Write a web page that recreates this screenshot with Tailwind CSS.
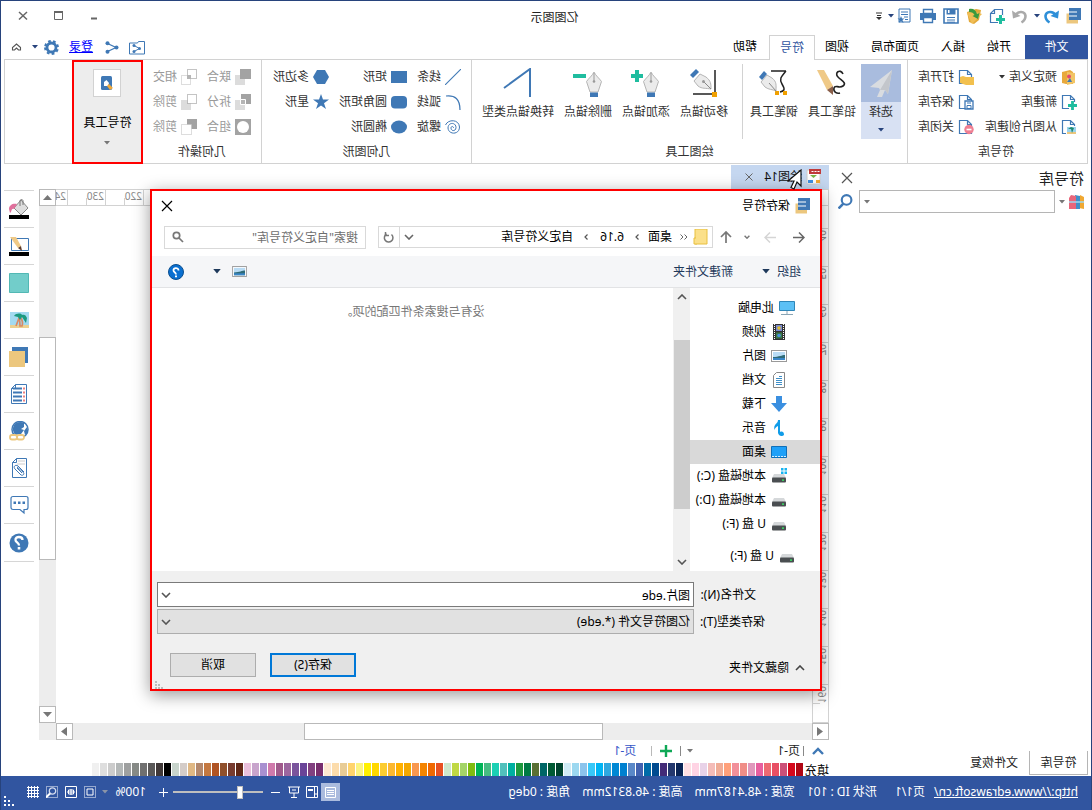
<!DOCTYPE html>
<html lang="zh-CN">
<head>
<meta charset="utf-8">
<title>亿图图示</title>
<script src="https://cdn.jsdelivr.net/npm/@tailwindcss/browser@4"></script>
</head>
<body class="overflow-hidden bg-white font-['Noto_Sans','Noto_Sans_CJK_SC',sans-serif] text-xs leading-4 text-[#222]">
<svg width="0" height="0" class="absolute">
  <defs>
    <symbol id="caret" viewBox="0 0 6 4"><path d="M0 0h6L3 3.5z" fill="currentColor"/></symbol>
    <symbol id="chev" viewBox="0 0 10 6"><path d="M1 1l4 4 4-4" fill="none" stroke="currentColor" stroke-width="1.6"/></symbol>
    <symbol id="doc" viewBox="0 0 16 16"><path d="M5.500 1.500H13.500V14.500H1.500V5.500zM5.500 1.500V5.500H1.500" fill="#fff" stroke="#3f78b5" stroke-width="1.200"/></symbol>
    <symbol id="logo" viewBox="0 0 16 16"><path d="M4 5.500h11.500v10H4z" fill="#ecc77e"/><path d="M1 0h12v12H1z" fill="#3f78b5"/><path d="M5 3.500h8v1H5zM5 7.500h8v1H5z" fill="#fff"/></symbol>
    <symbol id="drive" viewBox="0 0 16 16"><path d="M3 6h10l2 4H1z" fill="#d5d8da"/><rect x="1" y="9.500" width="14" height="5" rx="1" fill="#4a4e51"/><rect x="3" y="11.500" width="2" height="1.200" fill="#3f6"/></symbol>
    <symbol id="photo" viewBox="0 0 16 12"><rect x=".5" y=".5" width="15" height="11" fill="#fff" stroke="#999"/><path d="M2 2h12v8H2z" fill="#b9dcf5"/><path d="M2 5c3 0 6 2 12 2v3H2z" fill="#2f6b78"/><path d="M2 8h12v2H2z" fill="#3a86c8"/></symbol>
    <symbol id="pen" viewBox="0 0 16 26"><path d="M8 0C6 4 3 6 .500 9.500L4 20h8l3.500-10.500C13 6 10 4 8 0z" fill="#ebebeb" stroke="#b5b5b5"/><path d="M8 1v8" stroke="#999"/><circle cx="8" cy="9.500" r="1.300" fill="#999"/><path d="M4 20.500h8V25H4z" fill="#3f78b5"/></symbol>
  </defs>
</svg>

<div class="relative flex min-h-screen -scale-x-100 flex-col border-x border-t border-[#27437c] bg-white">

  <header class="flex flex-col">
    <div class="flex h-[30px] items-center pl-[9px]">
      <div class="flex flex-1 items-center gap-[7px]">
        <svg class="size-4"><use href="#logo"/></svg>
        <button class="block" aria-label="撤销"><svg class="size-4" viewBox="0 0 16 16"><path d="M3 7.500C6 2.500 13 3 13.500 8c0 3-1.500 5-4 6.500" fill="none" stroke="#2e8fd8" stroke-width="2.600"/><path d="M0 2.500l1 8 7.500-2.500z" fill="#2e8fd8"/></svg></button>
        <svg class="-ml-1 -mr-px h-1 w-1.5 text-[#27437c]"><use href="#caret"/></svg>
        <button class="block" aria-label="重做"><svg class="size-4" viewBox="0 0 16 16"><path d="M13 7.500C10 2.500 3 3 2.500 8c0 3 1.500 5 4 6.500" fill="none" stroke="#aaa" stroke-width="2.600"/><path d="M16 2.500l-1 8-7.500-2.500z" fill="#aaa"/></svg></button>
        <button class="block" aria-label="新建"><svg class="size-4" viewBox="0 0 16 16"><use href="#doc" transform="scale(-1 1) translate(-16 0)"/><path d="M9 8.500h7v7H9z" fill="#fff"/><path d="M5 4v0M4.500 7v9M0 11.500h9" stroke="#fff" stroke-width="5"/><path d="M4.500 7v9M0 11.500h9" stroke="#1fbd9f" stroke-width="3"/><path d="M9 14.500h5.500V8" fill="none" stroke="#3f78b5" stroke-width="1.200"/></svg></button>
        <button class="block" aria-label="打开"><svg class="size-4" viewBox="0 0 16 16"><path d="M1 2l5-1 9 3-2 10-5 2L3 12z" fill="#e3a93a"/><path d="M0 6l9-3 6 2-5 11z" fill="#f0bd55"/><path d="M13 1C9 0 6 2 5 6L2.500 5l1.500 6 5.500-3-2-1c1-2 2.500-3 5.500-3z" fill="#3a9a3e"/></svg></button>
        <button class="block" aria-label="保存"><svg class="size-4" viewBox="0 0 16 16"><path d="M1 1h14v14H1z" fill="#fff" stroke="#3f78b5" stroke-width="1.600"/><path d="M3.500 1h9v5.500h-9z" fill="#3f78b5"/><path d="M9.500 2h1.500v3H9.500z" fill="#fff"/><path d="M4 9.500h8M4 12h8M4 14.200h8" stroke="#3f78b5"/></svg></button>
        <button class="block" aria-label="打印"><svg class="size-4" viewBox="0 0 16 16"><path d="M0 5h16v7H0z" fill="#3f78b5"/><path d="M3.500 1.500h9v4h-9zM3.500 9.500h9v5h-9z" fill="#fff" stroke="#3f78b5" stroke-width="1.400"/></svg></button>
        <button class="block" aria-label="页面"><svg class="size-4" viewBox="0 0 16 16"><path d="M3 1h11v13H3z" fill="#fff" stroke="#3f78b5"/><path d="M5 4h7M5 6.500h7M5 9h4M5 11.500h3" stroke="#3f78b5"/><path d="M12 8l1 2.500 2.500 0-2 1.500 1 3-2.500-1.800L9.500 15l1-3-2-1.500H11z" fill="#3f78b5"/></svg></button>
        <svg class="-ml-1 h-1 w-1.5 text-[#27437c]"><use href="#caret"/></svg>
        <svg class="-ml-px h-2 w-1.5 text-[#333]" viewBox="0 0 6 8"><path d="M0 1h6M1 3.500h4" stroke="#333"/><path d="M0 5h6L3 8z" fill="#333"/></svg>
      </div>
      <h1 class="mr-[10px] mt-1">亿图图示</h1>
      <div class="flex flex-1 items-center justify-end gap-[23px] pr-4 text-[#666]">
        <button aria-label="最小化"><svg class="size-3" viewBox="0 0 12 12"><path d="M2 8.500h6" stroke="#666" stroke-width="2"/></svg></button>
        <button aria-label="最大化"><svg class="size-3" viewBox="0 0 12 12"><path d="M1.500 1.500h8v8h-8z" fill="none" stroke="#666"/><path d="M1 2h9" stroke="#666" stroke-width="2"/></svg></button>
        <button aria-label="关闭"><svg class="size-3" viewBox="0 0 12 12"><path d="M2 2l8 7.500M10 2L2 9.500" stroke="#666" stroke-width="1.500"/></svg></button>
      </div>
    </div>

    <div class="flex h-[28px] items-end px-[3px]">
      <nav class="flex h-6 flex-1 text-black">
        <button class="w-[63px] bg-[#3155a0] text-white">文件</button>
        <button class="ml-[14px]">开始</button>
        <button class="ml-[22px]">插入</button>
        <button class="ml-[22px]">页面布局</button>
        <button class="ml-[22px]">视图</button>
        <button class="z-10 ml-[10px] h-[25px] w-[46px] border border-b-0 border-[#d2d2d2] bg-white text-[#3155a0]">符号</button>
        <button class="ml-[12px]">帮助</button>
      </nav>
      <div class="flex h-6 items-center pr-[7px]">
        <button aria-label="共享文件夹"><svg class="h-[15px] w-4" viewBox="0 0 16 15"><path d="M.500 1.500h6l1 1.500h8v11H.500z" fill="none" stroke="#3f78b5"/><path d="M11 5.500L5.500 8.500 11 11.500" fill="none" stroke="#3f78b5"/><circle cx="11" cy="5.500" r="1.500" fill="#3f78b5"/><circle cx="5.500" cy="8.500" r="1.500" fill="#3f78b5"/><circle cx="11" cy="11.500" r="1.500" fill="#3f78b5"/></svg></button>
        <button class="ml-[10px]" aria-label="共享"><svg class="h-[13px] w-[14px]" viewBox="0 0 14 13"><path d="M11.500 2.500L3 6.500l8.500 4" fill="none" stroke="#3f78b5" stroke-width="1.300"/><circle cx="11.500" cy="2.200" r="2" fill="#3f78b5"/><circle cx="2.500" cy="6.500" r="2" fill="#3f78b5"/><circle cx="11.500" cy="10.800" r="2" fill="#3f78b5"/></svg></button>
        <a href="#" class="ml-[12px] text-[#0000ff] underline">登录</a>
        <button class="ml-[10px]" aria-label="设置"><svg class="size-[15px]" viewBox="0 0 14 14"><circle cx="7" cy="7" r="4.200" fill="none" stroke="#3f78b5" stroke-width="2.600"/><circle cx="7" cy="7" r="6" fill="none" stroke="#3f78b5" stroke-width="1.900" stroke-dasharray="2.500 2.212"/></svg></button>
        <svg class="ml-[6px] h-1 w-1.5 text-[#27437c]"><use href="#caret"/></svg>
        <button class="ml-[10px]" aria-label="折叠功能区"><svg class="h-[9px] w-[11px]" viewBox="0 0 11 9"><path d="M1.500 4.500L5.500 1l4 3.500v2.500H7.500L5.500 5 3.500 7h-2z" fill="none" stroke="#555" stroke-width="1.100"/></svg></button>
      </div>
    </div>

    <section class="mx-[3px] flex h-[105px] border border-[#d2d2d2] text-[#333]">
      <div class="flex w-[180px] flex-col border-r border-[#d2d2d2] pt-1">
        <div class="grid auto-rows-[25px] grid-cols-[103px_76px]">
          <button class="flex items-center gap-1 pl-[10px]"><svg class="size-4" viewBox="0 0 16 16"><path d="M4 3l3-2 8 2v11l-4 1H4z" fill="#e8a93c"/><path d="M2 4l8-1v13l-8-2z" fill="#f2c566"/><circle cx="8" cy="7.500" r="2" fill="#e5486d"/><path d="M5 13l2-4 3 4z" fill="#3f78b5"/></svg>预定义库<svg class="h-1 w-1.5"><use href="#caret"/></svg></button>
          <button class="flex items-center gap-1 pl-[10px]"><svg class="size-4" viewBox="0 0 16 16"><use href="#doc" transform="translate(1 0)"/><path d="M0 8h8l3-1 3 1v6l-6 2H0z" fill="#f2c04e"/></svg>打开库</button>
          <button class="flex items-center gap-1 pl-[10px]"><svg class="size-4" viewBox="0 0 16 16"><use href="#doc" transform="translate(1 0)"/><path d="M0 8h8v8H0z" fill="#fff"/><path d="M4.500 7v9M0 11.500h9" stroke="#1fbd9f" stroke-width="2.800"/></svg>新建库</button>
          <button class="flex items-center gap-1 pl-[10px]"><svg class="size-4" viewBox="0 0 16 16"><use href="#doc" transform="translate(1 0)"/><path d="M1 7h8v8H1z" fill="#fff" stroke="#3f78b5" stroke-width="1.300"/><path d="M3 9h4M3 11.500h4v3H3z" fill="none" stroke="#3f78b5"/></svg>保存库</button>
          <button class="flex items-center gap-1 pl-[10px]"><svg class="size-4" viewBox="0 0 16 16"><use href="#doc" transform="translate(1 0)"/><path d="M.500 7.500h10v8H.500z" fill="#9ad3ee" stroke="#fff"/><path d="M1 13h9v2H1z" fill="#ecc77e"/><path d="M3 9l3-1 3 2-3 0-1 4z" fill="#1f8a70"/></svg>从图片创建库</button>
          <button class="flex items-center gap-1 pl-[10px]"><svg class="size-4" viewBox="0 0 16 16"><use href="#doc" transform="translate(1 0)"/><circle cx="5" cy="10.500" r="4.700" fill="#f07f92"/><path d="M2.500 10.500h5" stroke="#fff" stroke-width="1.600"/></svg>关闭库</button>
        </div>
        <p class="flex h-6 items-center justify-center pt-0.5 pl-[3px]">符号库</p>
      </div>

      <div class="flex w-[436px] flex-col border-r border-[#d2d2d2] pt-1">
        <div class="flex h-[75px]">
          <button class="ml-[6px] flex w-10 flex-col items-center bg-[#d8e1f3]"><span class="flex h-[38px] w-full items-center justify-center bg-[#a9bcde]"><svg class="size-7" viewBox="0 0 28 28"><path d="M3 1l22 17-9 1-1 2 3 7-5 0-3-7-3 4z" fill="#d9dce0"/><path d="M3 1l12 20-5 0-3 4z" fill="#c3c6cb"/></svg></span><span class="mt-0.5">选择</span><svg class="mt-2 h-1 w-1.5 text-[#27437c]"><use href="#caret"/></svg></button>
          <button class="flex w-[58px] flex-col items-center"><svg class="my-1 h-[30px] w-8" viewBox="0 0 32 30"><path d="M5 6C8 0 14 5 10 9S1 15 5 18s8-2 9 2-3 6-6 5" fill="none" stroke="#222" stroke-width="1.600"/><path d="M24 2l7 0-10 20-6-4z" fill="#efc987"/><path d="M15 18l6 4-6 5z" fill="#8a5f4a"/></svg><span class="mt-0.5">铅笔工具</span></button>
          <button class="flex w-[58px] flex-col items-center"><svg class="my-1 h-[30px] w-8" viewBox="0 0 32 30"><path d="M4 3h15M4 3c5 6 7 8 4 13s-3 7 2 8" fill="none" stroke="#222" stroke-width="1.500"/><path d="M3 23h4v4H3zM11 23h4v4h-4z" fill="#f0a000"/><path d="M14 23c0-6-1-9 4-13l5-3 6 7-4 5c-4 3-7 2-11 4z" fill="#ebebeb" stroke="#b5b5b5"/><path d="M14 23l7-8" stroke="#888"/><path d="M23 6l3-3 5 6-3 3z" fill="#3f78b5"/></svg><span class="mt-0.5">钢笔工具</span></button>
          <div class="ml-[2px] mr-[9px] w-px bg-[#d2d2d2]"></div>
          <button class="flex w-[58px] flex-col items-center"><svg class="my-1 h-[30px] w-8" viewBox="0 0 32 30"><path d="M5 2v26M5 26h22" stroke="#222" stroke-width="1.500"/><path d="M3 24h5v5H3z" fill="#f0a000"/><path d="M9 21c0-5 0-8 5-12l6-3 6 7-4 5c-4 3-8 2-13 3z" fill="#ebebeb" stroke="#b5b5b5"/><path d="M9 21l7-7" stroke="#888"/><circle cx="16.500" cy="13.500" r="1.500" fill="#999"/><path d="M21 4l3-3 6 6-3 3z" fill="#3f78b5"/></svg><span class="mt-0.5">移动锚点</span></button>
          <button class="flex w-[58px] flex-col items-center"><svg class="my-1 h-[30px] w-8" viewBox="0 0 32 30"><svg x="3" y="4" width="16" height="26"><use href="#pen"/></svg><path d="M25 2v12M19 8h12" stroke="#1fbd9f" stroke-width="4"/></svg><span class="mt-0.5">添加锚点</span></button>
          <button class="flex w-[58px] flex-col items-center"><svg class="my-1 h-[30px] w-8" viewBox="0 0 32 30"><svg x="2" y="4" width="16" height="26"><use href="#pen"/></svg><path d="M18 8h13" stroke="#1fbd9f" stroke-width="4"/></svg><span class="mt-0.5">删除锚点</span></button>
          <button class="flex w-[82px] flex-col items-center"><svg class="my-1 h-[30px] w-8" viewBox="0 0 32 30"><path d="M4 29V1L30 20" fill="none" stroke="#3f78b5" stroke-width="2"/></svg><span class="mt-0.5">转换锚点类型</span></button>
        </div>
        <p class="flex h-6 items-center justify-center pt-0.5">绘图工具</p>
      </div>

      <div class="flex w-[210px] flex-col border-r border-[#d2d2d2] pt-1">
        <div class="grid auto-rows-[25px] grid-cols-[54px_78px_68px] pl-[10px]">
          <button class="flex items-center gap-1"><svg class="size-4" viewBox="0 0 16 16"><path d="M0 0l16 16" stroke="#3f78b5" stroke-width="1.100"/></svg>线条</button>
          <button class="flex items-center gap-1"><svg class="size-4" viewBox="0 0 16 16"><path d="M0 2h16v12H0z" fill="#3f78b5"/></svg>矩形</button>
          <button class="flex items-center gap-1"><svg class="size-4" viewBox="0 0 16 16"><path d="M4 1h8l4 7-4 7H4L0 8z" fill="#3f78b5"/></svg>多边形</button>
          <button class="flex items-center gap-1"><svg class="size-4" viewBox="0 0 16 16"><path d="M1 16C1 5 6 1 15 2" fill="none" stroke="#3f78b5" stroke-width="1.200"/></svg>弧线</button>
          <button class="flex items-center gap-1"><svg class="size-4" viewBox="0 0 16 16"><rect y="2" width="16" height="12.500" rx="4" fill="#3f78b5"/></svg>圆角矩形</button>
          <button class="flex items-center gap-1"><svg class="size-4" viewBox="0 0 16 16"><path d="M8 0l2 5.500h6l-5 3.700L13 15 8 11.500 3 15l2-5.800L0 5.500h6z" fill="#3f78b5"/></svg>星形</button>
          <button class="flex items-center gap-1"><svg class="size-4" viewBox="0 0 16 16"><path d="M15.500 6C13 0 2 0 1.500 8c0 8 11 8 11.500 1C13 3 5 3 5 8.500c0 4 5 4 5 .500 0-2-2.500-2-2.500 0" fill="none" stroke="#3f78b5"/></svg>螺旋</button>
          <button class="flex items-center gap-1"><svg class="size-4" viewBox="0 0 16 16"><ellipse cx="8" cy="8" rx="8" ry="6.500" fill="#3f78b5"/></svg>椭圆形</button>
        </div>
        <p class="flex h-6 items-center justify-center pt-0.5">几何图形</p>
      </div>

      <div class="flex w-[118px] flex-col pt-1">
        <div class="grid auto-rows-[25px] grid-cols-[54px_54px] pl-[10px] text-[#999]">
          <button class="flex items-center gap-1"><svg class="size-4" viewBox="0 0 16 16"><path d="M6 6h10v10H6z" fill="#dcdcdc"/><path d="M0 0h11v10H0z" fill="#a3a3a3"/></svg>联合</button>
          <button class="flex items-center gap-1"><svg class="size-4" viewBox="0 0 16 16"><path d="M.500.500h9v9h-9z" fill="none" stroke="#888" stroke-dasharray="1 1"/><path d="M6.500 6.500h9v9h-9z" fill="none" stroke="#bbb" stroke-dasharray="1 1"/><path d="M6 6h4v4H6z" fill="#b5b5b5"/></svg>相交</button>
          <button class="flex items-center gap-1"><svg class="size-4" viewBox="0 0 16 16"><path d="M0 0h10v10H0z" fill="#a3a3a3"/><path d="M6 6h10v10H6z" fill="#dcdcdc"/><path d="M5.500 5.500h5v5h-5z" fill="#b5b5b5" stroke="#fff"/></svg>拆分</button>
          <button class="flex items-center gap-1"><svg class="size-4" viewBox="0 0 16 16"><path d="M6 6h10v10H6z" fill="#dcdcdc"/><path d="M.500.500h9v9h-9z" fill="#fff" stroke="#888" stroke-dasharray="1 1"/></svg>剪除</button>
          <button class="flex items-center gap-1"><svg class="size-4" viewBox="0 0 16 16"><path d="M0 0h16v16H0z" fill="#a3a3a3"/><circle cx="8" cy="8" r="6" fill="#fff"/></svg>组合</button>
          <button class="flex items-center gap-1"><svg class="size-4" viewBox="0 0 16 16"><path d="M0 0h10v10H0z" fill="#a3a3a3"/><path d="M5.500 5.500h10v10h-10z" fill="#fff" stroke="#bbb" stroke-dasharray="1 1"/></svg>剪除</button>
        </div>
        <p class="flex h-6 items-center justify-center pt-0.5">几何操作</p>
      </div>

      <button class="-mb-px flex w-[71px] flex-col items-center border-2 border-[#f00] bg-[#ededed] pt-[7px] text-black">
        <span class="flex size-7 items-center justify-center border border-[#d2d2d2] bg-white"><svg class="size-4" viewBox="0 0 16 16"><rect x="3" y="1" width="11" height="14" rx="1.500" fill="#3f78b5"/><path d="M6 8l2.500-3L11 7v4H7z" fill="#fff"/><path d="M2 13l4-4 2 2-3 4z" fill="#f0a93c"/></svg></span>
        <span class="mt-[18px]">符号工具</span>
        <svg class="mt-[10px] h-1 w-1.5 text-[#777]"><use href="#caret"/></svg>
      </button>
    </section>
  </header>

  <main class="flex flex-1">
    <aside class="flex w-[262px] flex-col pl-[3px]">
      <div class="flex h-[26px] items-center justify-between pr-[12px] pt-0.5">
        <h2 class="pl-1 text-[15px]">符号库</h2>
        <button aria-label="关闭"><svg class="size-3" viewBox="0 0 12 12"><path d="M1 1l10 10M11 1L1 11" stroke="#555" stroke-width="1.200"/></svg></button>
      </div>
      <div class="flex items-center pl-[3px]">
        <svg class="size-4" viewBox="0 0 16 16"><path d="M1 3l4-2 1 13-5 1z" fill="#f0a832"/><path d="M5 2l5-1v14H5z" fill="#3f8fc8"/><path d="M9 2l5-1 2 3v11H9z" fill="#e8667a"/><path d="M1 8h15" stroke="#9fd8f0" stroke-width="1.500"/></svg>
        <svg class="ml-[4px] h-1 w-1.5 text-[#777]"><use href="#caret"/></svg>
        <label class="relative ml-[4px]"><input class="h-[23px] w-[196px] border border-[#b5b5b5] px-2" aria-label="搜索符号"><svg class="absolute right-[5px] top-[10px] h-1 w-1.5 text-[#777]"><use href="#caret"/></svg></label>
        <button class="ml-[6px]" aria-label="搜索"><svg class="size-[15px] -scale-x-100" viewBox="0 0 14 14"><circle cx="8" cy="5.500" r="4.500" fill="none" stroke="#3f78b5" stroke-width="2"/><path d="M5 9l-4.500 4.500" stroke="#3f78b5" stroke-width="2.400"/></svg></button>
      </div>
      <div class="mt-auto mb-px flex h-6 items-center">
        <button class="h-6 w-[59px] border border-t-0 border-[#b5b5b5]">符号库</button>
        <button class="ml-[11px]">文件恢复</button>
      </div>
    </aside>

    <section class="flex flex-1 flex-col">
      <div class="flex h-[25px] items-end">
        <div class="flex h-6 w-[98px] items-center gap-1 bg-[#c5d7f0] px-[7px] text-[#111]">
          <svg class="size-4" viewBox="0 0 16 16"><path d="M2 1h13v14H2z" fill="#fff" stroke="#ccc"/><path d="M1 0h12v5H1z" fill="#c03a3a"/><path d="M2.500 2.500h9" stroke="#fff" stroke-dasharray="2 1"/><path d="M5 6h7L8.500 9z" fill="#7ab648"/><path d="M2 11h4v3H2z" fill="#f0a832"/><path d="M9 11h5v3H9z" fill="#3f8fe0"/></svg>
          <span>绘图14</span>
          <button class="ml-auto mr-[-2px]" aria-label="关闭标签"><svg class="size-2" viewBox="0 0 8 8"><path d="M.500.500l7 7M7.500.500l-7 7" stroke="#666"/></svg></button>
          <span class="w-[5px]"></span>
        </div>
      </div>

      <div class="flex flex-1">
        <div class="flex flex-1 flex-col">
          <div class="flex h-[17px]">
            <div class="w-[17px] border border-[#d2d2d2]"></div>
            <div id="hruler" class="flex w-0 flex-1 overflow-hidden border-y border-[#d2d2d2] pl-[22px]"></div>
          </div>
          <div class="flex h-0 flex-1">
            <div id="vruler" class="w-[17px] overflow-hidden border-x border-b border-[#d2d2d2] pt-[22px]"></div>
            <div class="flex-1 bg-white"></div>
          </div>
          <div class="flex h-[17px] bg-[#ededed]">
            <button class="flex w-[17px] items-center justify-center border border-[#b9b9b9] bg-white" aria-label="向左滚动"><svg class="h-[9px] w-[6px]" viewBox="0 0 6 9"><path d="M6 0v9L0 4.500z" fill="#777"/></svg></button>
            <div class="flex flex-1 pl-[209px] pr-[231px]"><div class="flex-1 border border-[#b9b9b9] bg-white"></div></div>
            <button class="flex w-[17px] items-center justify-center border border-[#b9b9b9] bg-white" aria-label="向右滚动"><svg class="h-[9px] w-[6px]" viewBox="0 0 6 9"><path d="M0 0v9l6-4.500z" fill="#777"/></svg></button>
          </div>
        </div>
        <div class="flex w-[17px] flex-col bg-[#ededed] pb-[17px]">
          <button class="flex h-[17px] items-center justify-center border border-[#b9b9b9] bg-white" aria-label="向上滚动"><svg class="h-[5px] w-[9px]" viewBox="0 0 9 5"><path d="M0 5h9L4.500 0z" fill="#777"/></svg></button>
          <div class="flex flex-1 flex-col pt-[131px] pb-[146px]"><div class="flex-1 border border-[#b9b9b9] bg-white"></div></div>
          <button class="flex h-[17px] items-center justify-center border border-[#b9b9b9] bg-white" aria-label="向下滚动"><svg class="h-[5px] w-[9px]" viewBox="0 0 9 5"><path d="M0 0h9L4.500 5z" fill="#777"/></svg></button>
        </div>
      </div>

      <div class="flex h-[22px] items-center pl-[5px]">
        <button aria-label="展开"><svg class="h-2 w-3" viewBox="0 0 12 8"><path d="M1 7l5-5 5 5" fill="none" stroke="#3f78b5" stroke-width="2.400"/></svg></button>
        <span class="ml-2 h-[10px] w-px bg-[#888]"></span>
        <button class="ml-[3px]">页-1</button>
        <svg class="ml-[84px] h-1 w-1.5 text-[#777]"><use href="#caret"/></svg>
        <span class="ml-[6px] h-[10px] w-px bg-[#888]"></span>
        <button class="ml-[8px]" aria-label="新增页"><svg class="size-3" viewBox="0 0 12 12"><path d="M6 0v12M0 6h12" stroke="#0ea856" stroke-width="2.400"/></svg></button>
        <span class="ml-[8px] h-[10px] w-px bg-[#b9b9b9]"></span>
        <button class="ml-[15px] text-[#3657c8]">页-1</button>
      </div>
      <div class="flex h-[14px] items-center gap-px text-black">
        <span class="w-[25px] pt-1">填充</span>
        <div id="palette" class="flex gap-px"></div>
      </div>
    </section>

    <nav class="ml-[5px] mr-[3px] mt-[26px] w-[30px] divide-y divide-[#d6d6d6] self-start border-y border-[#d6d6d6] [&>button]:flex [&>button]:h-[37px] [&>button]:w-full [&>button]:items-center [&>button]:justify-center">
      <button aria-label="填充"><svg class="size-5" viewBox="0 0 20 20"><path d="M8 1l7 8-7 7-7-7z" fill="#dedede" stroke="#888"/><path d="M6 6V2c0-2 3-2 3 0v5" fill="none" stroke="#777"/><path d="M12 5c4-1 8 1 8 5l-1 4c-2-1-1-5-4-4z" fill="#e0709c"/><path d="M0 16h20v4H0z" fill="#000"/></svg></button>
      <button aria-label="线条"><svg class="size-5" viewBox="0 0 20 20"><path d="M.500 2.500h17v12H.500z" fill="#fff" stroke="#3f78b5"/><path d="M13 1h6l-8 11-3-2z" fill="#efc987"/><path d="M8 10l3 2-4 3z" fill="#5c3a2a"/><path d="M0 16h20v4H0z" fill="#000"/></svg></button>
      <button aria-label="主题"><svg class="size-5" viewBox="0 0 20 20"><path d="M.500.500h19v19H.500z" fill="#72cdca" stroke="#52b8b4"/></svg></button>
      <button aria-label="图片"><svg class="size-5" viewBox="0 0 20 20"><path d="M0 2h19v16H0z" fill="#a3daf0"/><path d="M0 15h19v3H0z" fill="#ecd090"/><path d="M8 8c-2 4-2 6-1 8h2c0-3 0-5 1-8l3 8" fill="none" stroke="#d88a66" stroke-width="1.700"/><path d="M2 8c1-3 3-4 5-3 1-2 6-2 8 1l-4 1-2 3-2-3-4 6z" fill="#1c9a80"/></svg></button>
      <button aria-label="图层"><svg class="size-5" viewBox="0 0 20 20"><path d="M1 0h16v16H1z" fill="#3f78b5"/><path d="M4 4h16v16H4z" fill="#ecc77e"/></svg></button>
      <button aria-label="列表"><svg class="size-5" viewBox="0 0 20 20"><path d="M2.500.500h11l4 4v15h-15z" fill="#fff" stroke="#3f78b5"/><path d="M13.500.500v4h4" fill="none" stroke="#3f78b5"/><path d="M7 4.500h9M7 8.500h9M7 12.500h9M7 16.500h9" stroke="#3f78b5" stroke-width="2"/><path d="M4 4.500h2M4 8.500h2M4 12.500h2M4 16.500h2" stroke="#ee8080" stroke-width="2"/></svg></button>
      <button aria-label="超链接"><svg class="size-5" viewBox="0 0 20 20"><circle cx="9" cy="8.500" r="8" fill="#fff" stroke="#3f78b5" stroke-width="1.500"/><path d="M5 2c3-2 8-1 10 2 2 4 1 6-1 10l-6-1-3-4 3-1-3-2z" fill="#3f78b5"/><path d="M2 6l3 4-1 4-3-3z" fill="#3f78b5"/><rect x="5" y="14" width="7" height="4.500" rx="2" fill="#fff" stroke="#ecc77e" stroke-width="1.800"/><rect x="12" y="14" width="7" height="4.500" rx="2" fill="#fff" stroke="#ecc77e" stroke-width="1.800"/></svg></button>
      <button aria-label="附件"><svg class="size-5" viewBox="0 0 20 20"><path d="M2.500.500h10l4 4v15h-14z" fill="#fff" stroke="#3f78b5"/><path d="M12.500.500v4h4" fill="none" stroke="#3f78b5"/><path d="M4 3h7M4 6h8" stroke="#ccc"/><path d="M5 14l6-6c3-2 5 1 3 3l-6 6c-2 1-4-1-2-3l6-5M7 15l5-5" fill="none" stroke="#3f78b5"/></svg></button>
      <button aria-label="批注"><svg class="size-5" viewBox="0 0 20 20"><path d="M3 1.500h13q2 0 2 2v9q0 2-2 2H9L5 18v-3.500H3q-2 0-2-2v-9q0-2 2-2z" fill="#fff" stroke="#3f78b5" stroke-width="1.200"/><path d="M4 6.500h2.500v2.500H4zM8.500 6.500H11v2.500H8.500zM13 6.500h2.500v2.500H13z" fill="#3f78b5"/></svg></button>
      <button aria-label="帮助"><svg class="size-5" viewBox="0 0 20 20"><circle cx="10" cy="10" r="9.500" fill="#3f78b5"/><path d="M6.500 7c0-4 7.500-4 7 0 0 2.500-3.500 2.500-3.500 5.500" fill="none" stroke="#fff" stroke-width="2.300"/><path d="M8.700 14h2.600v2.500H8.700z" fill="#fff"/></svg></button>
    </nav>
  </main>

  <footer class="flex h-[35px] items-center bg-[#3155a0] pb-[3px] pl-[13px] pr-[3px] text-white">
    <a href="#" class="underline">http://www.edrawsoft.cn/</a>
    <span class="ml-[9px]">页1/1</span>
    <span class="ml-[18px]">形状 ID : 101</span>
    <span class="ml-3">宽度 : 48.4187mm</span>
    <span class="ml-3">高度 : 46.8312mm</span>
    <span class="ml-3">角度 : 0deg</span>
    <div class="ml-auto flex items-center">
      <button class="flex h-[18px] w-[19px] items-center justify-center bg-[#aabbde]" aria-label="普通视图"><svg class="size-[11px]" viewBox="0 0 11 11"><path d="M.500.500h10v10H.500zM2 3.500h7M2 5.500h7M2 7.500h7" fill="none" stroke="#fff"/></svg></button>
      <button class="ml-[3px]" aria-label="页面视图"><svg class="size-3" viewBox="0 0 12 12"><path d="M.500.500h11v11H.500zM3.500.500v11M.500 8h3" fill="none" stroke="#fff"/><path d="M5 4h5" stroke="#fff" stroke-width="2"/></svg></button>
      <button class="ml-[6px]" aria-label="演示视图"><svg class="size-3" viewBox="0 0 12 12"><path d="M0 1h12M1.500 1v6h9V1M6 7v4M3 11.500h6M4 4h4" fill="none" stroke="#fff"/></svg></button>
      <button class="ml-[8px]" aria-label="缩小"><svg class="size-[9px]" viewBox="0 0 9 9"><path d="M0 4.500h9" stroke="#fff"/></svg></button>
      <input type="range" min="0" max="100" value="76" aria-label="缩放" class="ml-2 h-4 w-[90px] rotate-180 appearance-none bg-transparent [&::-webkit-slider-runnable-track]:h-0.5 [&::-webkit-slider-runnable-track]:bg-[#bfbfbf] [&::-webkit-slider-thumb]:-mt-[6px] [&::-webkit-slider-thumb]:h-[13px] [&::-webkit-slider-thumb]:w-[6px] [&::-webkit-slider-thumb]:appearance-none [&::-webkit-slider-thumb]:border [&::-webkit-slider-thumb]:border-[#bfbfbf] [&::-webkit-slider-thumb]:bg-white">
      <button class="ml-[5px]" aria-label="放大"><svg class="size-[9px]" viewBox="0 0 9 9"><path d="M0 4.500h9M4.500 0v9" stroke="#fff"/></svg></button>
      <span class="ml-[13px] w-8">100%</span>
      <svg class="ml-[6px] h-1 w-1.5 text-[#8a94a8]"><use href="#caret"/></svg>
      <button class="ml-[6px]" aria-label="选区"><svg class="size-3" viewBox="0 0 12 12"><path d="M.500.500h11v11H.500z" fill="none" stroke="#fff" stroke-dasharray="1 1"/><path d="M3 3h6v6H3z" fill="none" stroke="#fff"/></svg></button>
      <button class="ml-[7px]" aria-label="适应"><svg class="size-3" viewBox="0 0 12 12"><path d="M.500.500h11v11H.500zM2 6h8M6 3v6M3.500 4v4h5V4z" fill="none" stroke="#fff"/></svg></button>
      <button class="ml-[7px]" aria-label="放大区域"><svg class="size-3" viewBox="0 0 12 12"><path d="M.500.500h11v11H.500z" fill="none" stroke="#fff" stroke-dasharray="1 1"/><circle cx="5.500" cy="5" r="3.200" fill="#3155a0" stroke="#d5ddef" stroke-width="1.300"/><path d="M8 7.500l4 4" stroke="#fff" stroke-width="2"/></svg></button>
      <button class="ml-[7px]" aria-label="网格"><svg class="size-3" viewBox="0 0 12 12"><path d="M1.500 0v12M4.500 0v12M7.500 0v12M10.500 0v12M0 1.500h12M0 4.500h12M0 7.500h12M0 10.500h12" stroke="#fff"/></svg></button>
      <svg class="ml-[13px] mt-[18px] size-[10px]" viewBox="0 0 10 10"><path d="M8 0h2v2H8zM8 4h2v2H8zM4 4h2v2H4zM8 8h2v2H8zM4 8h2v2H4zM0 8h2v2H0z" fill="#fff"/></svg>
    </div>
  </footer>

  <div role="dialog" aria-label="保存符号" class="absolute left-[269px] top-[188px] flex w-[672px] flex-col border-2 border-[#f00] bg-white text-black shadow-[0_4px_16px_rgba(0,0,0,0.4)]">
    <div class="flex h-[30px] items-center px-[9px]">
      <svg class="size-4"><use href="#logo"/></svg>
      <h2 class="ml-[5px]">保存符号</h2>
      <button class="ml-auto" aria-label="关闭对话框"><svg class="size-3" viewBox="0 0 12 12"><path d="M1 1l10 10M11 1L1 11" stroke="#000" stroke-width="1.200"/></svg></button>
    </div>
    <div class="flex h-[35px] items-center pb-[3px] pl-[15px] pr-[12px]">
      <button aria-label="后退"><svg class="h-[11px] w-3" viewBox="0 0 12 11"><path d="M12 5.500H1M6 .500l-5 5 5 5" fill="none" stroke="#666" stroke-width="1.500"/></svg></button>
      <button class="ml-[17px]" aria-label="前进"><svg class="h-[11px] w-3" viewBox="0 0 12 11"><path d="M0 5.500h11M6 .500l5 5-5 5" fill="none" stroke="#d5d5d5" stroke-width="1.500"/></svg></button>
      <svg class="ml-[14px] h-1 w-1.5" viewBox="0 0 10 6"><path d="M1 1l4 4 4-4" fill="none" stroke="#777" stroke-width="2.400"/></svg>
      <button class="ml-[12px]" aria-label="向上"><svg class="size-3" viewBox="0 0 12 12"><path d="M6 12V1M1 6l5-5 5 5" fill="none" stroke="#777" stroke-width="1.700"/></svg></button>
      <div class="ml-[7px] flex h-[22px] w-[335px] items-center border border-[#d9d9d9] pl-1">
        <svg class="size-4" viewBox="0 0 16 16"><path d="M1 0h12v15H1z" fill="#fbe08a" stroke="#e8c040"/><path d="M12 9h2v6h-3" fill="#fbe08a" stroke="#e8c040"/></svg>
        <svg class="ml-[4px] h-[6px] w-2" viewBox="0 0 8 6"><path d="M3.500.500L1 3l2.500 2.500M7.500.500L5 3l2.500 2.500" fill="none" stroke="#666"/></svg>
        <button class="ml-[8px]">桌面</button>
        <svg class="ml-[9px] h-[6px] w-1" viewBox="0 0 4 6"><path d="M.500.500L3 3 .500 5.500" fill="none" stroke="#555" stroke-width="1.200"/></svg>
        <button class="ml-[11px]">6.16</button>
        <svg class="ml-[12px] h-[6px] w-1" viewBox="0 0 4 6"><path d="M.500.500L3 3 .500 5.500" fill="none" stroke="#555" stroke-width="1.200"/></svg>
        <button class="ml-[11px]">自定义符号库</button>
        <svg class="ml-auto mr-[4px] h-[6px] w-[10px] text-[#666]"><use href="#chev"/></svg>
        <button class="flex h-full w-[21px] items-center justify-center border-l border-[#d9d9d9]" aria-label="刷新"><svg class="size-[11px]" viewBox="0 0 11 11"><path d="M7.500 2A4.300 4.300 0 1 1 2.500 2.500" fill="none" stroke="#777" stroke-width="1.500"/><path d="M2.500 0v3.500H6" fill="none" stroke="#777" stroke-width="1.500" transform="scale(-1 1) translate(-11 0)"/></svg></button>
      </div>
      <label class="relative ml-auto"><input class="block h-[23px] w-[202px] border border-[#d9d9d9] pl-[7px] placeholder:text-[#6e6e6e]" placeholder="搜索&quot;自定义符号库&quot;" aria-label="搜索"><svg class="absolute right-[8px] top-[5px] size-3" viewBox="0 0 12 12"><circle cx="7.500" cy="4.500" r="3.200" fill="none" stroke="#777" stroke-width="1.700"/><path d="M5 7l-4 4" stroke="#777" stroke-width="1.700"/></svg></label>
    </div>
    <div class="flex h-8 items-center border-b border-[#e2e3e5] bg-[#f5f6f8] pl-[19px] pr-[16px] text-[#1e395b]">
      <button>组织</button>
      <svg class="ml-[7px] h-[5px] w-2"><use href="#caret"/></svg>
      <button class="ml-[29px]">新建文件夹</button>
      <button class="ml-auto" aria-label="视图"><svg class="h-[11px] w-[15px]"><use href="#photo"/></svg></button>
      <svg class="ml-[11px] h-[5px] w-2"><use href="#caret"/></svg>
      <button class="ml-[29px]" aria-label="获取帮助"><svg class="size-4" viewBox="0 0 16 16"><circle cx="8" cy="8" r="7.500" fill="#0a6fd0" stroke="#0c4f8f"/><path d="M5.500 6.500c0-3.500 5.500-3 5 0 0 1.800-2.500 1.800-2.500 4" fill="none" stroke="#fff" stroke-width="1.800"/><path d="M7 11.500h2v1.800H7z" fill="#fff"/></svg></button>
    </div>
    <div class="flex h-[283px]">
      <ul class="w-[130px] pt-[8px] [&>li]:flex [&>li]:h-6 [&>li]:items-center [&>li]:gap-[5px] [&>li]:whitespace-nowrap [&>li]:pl-[33px]">
        <li class="-ml-2"><svg class="size-4" viewBox="0 0 16 16"><path d="M.500 1.500h15v9H.500z" fill="#5cc0f5" stroke="#2f86b8"/><path d="M8 11v3M2 14.500h12" stroke="#8aa5b5"/></svg>此电脑</li>
        <li><svg class="size-4" viewBox="0 0 16 16"><path d="M2 0h12v16H2z" fill="#333"/><path d="M5 1h6v6H5z" fill="#7a8ad0"/><path d="M5 8.500h6v6H5z" fill="#3a7a48"/><circle cx="8" cy="4" r="1.800" fill="#e0c030"/><circle cx="8" cy="11.500" r="1.800" fill="#4a90e0"/><path d="M3.500 0v16M12.500 0v16" stroke="#fff" stroke-dasharray="1 1"/></svg>视频</li>
        <li><svg class="size-4" viewBox="0 -2 16 16"><use href="#photo" width="16" height="12"/></svg>图片</li>
        <li><svg class="size-4" viewBox="0 0 16 16"><path d="M2.500.500h8l3 3v12h-11z" fill="#fff" stroke="#888"/><path d="M5 4.500h3M5 6.500h6M5 8.500h6M5 10.500h6M5 12.500h6" stroke="#3f8fc8"/></svg>文档</li>
        <li><svg class="size-4" viewBox="0 0 16 16"><path d="M5 0h6v7h5l-8 9-8-9h5z" fill="#3a8fe0"/></svg>下载</li>
        <li><svg class="size-4" viewBox="0 0 16 16"><path d="M7 0h2c0 4 5 4 3.500 10-.500-2-1.500-3-3.500-4v7c-1 4-6 3.500-6 1.500 0-2.500 2-3.500 4-2.500z" fill="#109ce8"/></svg>音乐</li>
        <li class="bg-[#d9d9d9]"><svg class="size-4" viewBox="0 0 16 16"><path d="M.500 2.500h15v11H.500z" fill="#1ea0f8" stroke="#0f6fb8"/><path d="M1 12.500h14" stroke="#d5eeff" stroke-dasharray="2 1"/></svg>桌面</li>
        <li><svg class="size-4" viewBox="0 0 16 16"><use href="#drive"/><path d="M0 0h2.500v2.500H0zM3.500 0H6v2.500H3.500zM0 3.500h2.500V6H0zM3.500 3.500H6V6H3.500z" fill="#18b4f0"/></svg>本地磁盘 (C:)</li>
        <li><svg class="size-4"><use href="#drive"/></svg>本地磁盘 (D:)</li>
        <li><svg class="size-4"><use href="#drive"/></svg>U 盘 (F:)</li>
        <li class="-ml-2 mt-2"><svg class="size-4"><use href="#drive"/></svg>U 盘 (F:)</li>
      </ul>
      <div class="flex w-4 flex-col items-center bg-[#f0f0f0] text-[#555]">
        <svg class="mt-[6px] h-[6px] w-[10px] rotate-180"><use href="#chev"/></svg>
        <div class="mb-auto mt-[40px] h-[169px] w-full bg-[#cdcdcd]"></div>
        <svg class="mb-[6px] h-[6px] w-[10px]"><use href="#chev"/></svg>
      </div>
      <p class="flex-1 border-l border-[#f0f0f0] pt-4 text-center text-[#777]">没有与搜索条件匹配的项。</p>
    </div>
    <form class="flex flex-col bg-[#f0f0f0] pt-[11px]">
      <div class="flex items-center pr-[5px]">
        <label for="fname" class="w-[126px] whitespace-nowrap pl-[64px]">文件名(N):</label>
        <div class="relative flex-1"><input id="fname" value="图片.ede" class="block h-[25px] w-full border border-[#7a7a7a] bg-white px-[3px]"><svg class="absolute right-[4px] top-[10px] h-[6px] w-[10px] text-[#555]"><use href="#chev"/></svg></div>
      </div>
      <div class="mt-[2px] flex items-center pr-[5px]">
        <label for="ftype" class="w-[126px] whitespace-nowrap pl-[55px]">保存类型(T):</label>
        <div class="relative flex-1"><select id="ftype" class="block h-[25px] w-full appearance-none border border-[#adadad] bg-[#e1e1e1] px-[3px]"><option>亿图符号文件 (*.ede)</option></select><svg class="absolute right-[4px] top-[10px] h-[6px] w-[10px] text-[#555]"><use href="#chev"/></svg></div>
      </div>
      <div class="flex items-center pl-[15px] pr-[18px] pt-[19px]">
        <button type="button" class="mt-1.5 flex items-center gap-[6px]"><svg class="h-[6px] w-[10px] rotate-180 text-[#444]"><use href="#chev"/></svg>隐藏文件夹</button>
        <button type="button" class="ml-auto h-6 w-[86px] border-2 border-[#0078d7] bg-[#e1e1e1]">保存(S)</button>
        <button type="button" class="ml-[14px] h-6 w-[86px] border border-[#adadad] bg-[#e1e1e1]">取消</button>
      </div>
      <svg class="ml-auto mr-[3px] mt-[4px] size-2" viewBox="0 0 8 8"><path d="M6 0h2v2H6zM6 3h2v2H6zM3 3h2v2H3zM6 6h2v2H6zM3 6h2v2H3zM0 6h2v2H0z" fill="#bbb"/></svg>
    </form>
  </div>

  <svg class="absolute left-[289px] top-[168px] h-[22px] w-[15px]" viewBox="0 0 15 22"><path d="M1 1v16l4-4 3 7 3-1.500-3-6.500h6z" fill="#fff" stroke="#111" stroke-width="1.200"/></svg>
</div>

<script>
  const colors = ('b00614 d6081c cc5078 e85064 ee6a72 e85f9f e098bc f08e88 f2909a ffa07a f0ac96 f4bcb8 e8d2e8 ffd4e4 ffdfe4 ' +
    '0a2455 24386e 432c78 004b90 006ba8 4262b0 5a88c8 0080d0 0088d4 2ea8e0 00b4f4 38c8f8 8cc4ec 9cd8f0 d0ecf6 ' +
    '00442e 005a34 006666 5a7034 007a44 1e9a3e 00b0a0 52c0bc 1cd0b4 46bc82 00b458 80bc10 a4d468 c0d844 cee8cc ' +
    'e85020 f06800 f48400 f89850 f4a800 ffb000 fcb830 fccc30 ffd800 fff000 fcf480 ffd46c e8cc96 fcdcac fde8d0 ' +
    '782e6e 824080 6a4498 7a549c 9c669f a05a8c d07aac a890d0 c8a4cc eac0dc ' +
    '602818 783c30 90502c b05424 c47840 b4886c e0b884 d4ccc8 c8d4cc ' +
    '000000 403838 5a5858 707070 868a86 9ea0a0 b4b8b8 cccccc dedede f0f0f0').split(' ');
  document.getElementById('palette').innerHTML = colors.map(c =>
    `<button class="h-[13px] w-[7px]" aria-label="#${c}" style="background:#${c}"></button>`).join('');

  let h = '', v = '';
  for (let n = 50; n <= 240; n += 10)
    h += `<div class="flex w-[38px] shrink-0 items-end border-l border-[#d2d2d2]"><span class="w-[18px] self-start pl-px text-[10px] leading-3 text-[#888]">${n}</span><i class="h-[7px] w-px bg-[#d2d2d2]"></i></div>`;
  for (let n = 40; n <= 160; n += 10)
    v += `<div class="flex h-[38px] flex-col items-end border-t border-[#d2d2d2]"><span class="h-[18px] self-start pt-px text-[10px] leading-3 text-[#888]"><b class="block rotate-180 font-normal [writing-mode:vertical-rl]">${n}</b></span><i class="h-px w-[7px] bg-[#d2d2d2]"></i></div>`;
  document.getElementById('hruler').innerHTML = h;
  document.getElementById('vruler').innerHTML = v;
</script>
</body>
</html>
